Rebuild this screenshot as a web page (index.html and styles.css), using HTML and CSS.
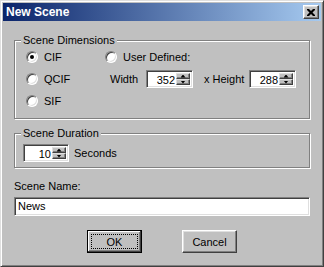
FILE: index.html
```html
<!DOCTYPE html>
<html>
<head>
<meta charset="utf-8">
<title>New Scene</title>
<link rel="stylesheet" href="styles.css">
</head>
<body>
<div class="window">
  <div class="titlebar">
    <span class="title">New Scene</span>
    <span class="close-btn"><svg width="8" height="7" viewBox="0 0 8 7"><path d="M0 0h2l2 2 2-2h2v1l-2.5 2.5L8 6v1H6L4 5 2 7H0V6l2.5-2.5L0 1z" fill="#000"/></svg></span>
  </div>
  <div class="content">
    <fieldset class="group dims">
      <legend>Scene Dimensions</legend>
      <div class="dims-grid">
        <div class="col-left">
          <div class="radio-row"><span class="radio checked"></span><span>CIF</span></div>
          <div class="radio-row"><span class="radio"></span><span>QCIF</span></div>
          <div class="radio-row"><span class="radio"></span><span>SIF</span></div>
        </div>
        <div class="col-right">
          <div class="radio-row"><span class="radio"></span><span>User Defined:</span></div>
          <div class="size-row">
            <span class="lbl-width">Width</span>
            <div class="spin spin-size"><span class="val">352</span><span class="spin-btns"><span class="sb"><i class="arr up"></i></span><span class="sb"><i class="arr down"></i></span></span></div>
            <span class="lbl-height">x Height</span>
            <div class="spin spin-size"><span class="val">288</span><span class="spin-btns"><span class="sb"><i class="arr up"></i></span><span class="sb"><i class="arr down"></i></span></span></div>
          </div>
        </div>
      </div>
    </fieldset>
    <fieldset class="group dur">
      <legend>Scene Duration</legend>
      <div class="dur-row">
        <div class="spin spin-dur"><span class="val">10</span><span class="spin-btns"><span class="sb"><i class="arr up"></i></span><span class="sb"><i class="arr down"></i></span></span></div>
        <span class="lbl-sec">Seconds</span>
      </div>
    </fieldset>
    <div class="name-label">Scene Name:</div>
    <div class="textfield">News</div>
    <div class="buttons">
      <div class="btn default"><span class="btn-face">OK</span></div>
      <div class="btn"><span class="btn-face">Cancel</span></div>
    </div>
  </div>
</div>
</body>
</html>
```
FILE: styles.css
```css
html, body {
  margin: 0;
  padding: 0;
  background: #c0c0c0;
}
body {
  font-family: "Liberation Sans", Arial, sans-serif;
  font-size: 11px;
  color: #000;
}
.window {
  width: 324px;
  height: 267px;
  box-sizing: border-box;
  background: #c0c0c0;
  border: 1px solid;
  border-color: #dfdfdf #404040 #404040 #dfdfdf;
  box-shadow: inset 1px 1px #fff, inset -1px -1px #808080;
  padding: 2px;
  display: flex;
  flex-direction: column;
}
.titlebar {
  height: 18px;
  background: linear-gradient(to right, #0a246a, #a6caf0);
  display: flex;
  align-items: center;
  justify-content: space-between;
  padding: 0 2px 0 3px;
}
.title {
  color: #fff;
  font-weight: bold;
  font-size: 12px;
  line-height: 18px;
}
.close-btn {
  width: 16px;
  height: 14px;
  box-sizing: border-box;
  background: #c0c0c0;
  border: 1px solid;
  border-color: #fff #404040 #404040 #fff;
  box-shadow: inset -1px -1px #808080, inset 1px 1px #dfdfdf;
  display: flex;
  align-items: center;
  justify-content: center;
}
.close-btn svg { display: block; }
.content {
  padding: 14px 11px 0 11px;
  display: flex;
  flex-direction: column;
}
.group {
  margin: 0;
  padding: 0;
  border: 1px solid #808080;
  box-shadow: inset 1px 1px #fff, 1px 1px #fff;
  min-width: 0;
}
.group legend {
  margin-left: 6px;
  padding: 0 2px;
  line-height: 11px;
  background: #c0c0c0;
}
.dims-grid {
  display: flex;
  padding: 0 0 6px 11px;
}
.col-left {
  width: 79px;
  display: flex;
  flex-direction: column;
}
.col-right {
  display: flex;
  flex-direction: column;
}
.radio-row {
  height: 22px;
  display: flex;
  align-items: center;
  gap: 6px;
}
.radio {
  width: 12px;
  height: 12px;
  box-sizing: border-box;
  border-radius: 50%;
  background: #fff;
  border: 1px solid;
  border-color: #808080 #fff #fff #808080;
  box-shadow: inset 1px 1px #404040, inset -1px -1px #dfdfdf;
  display: flex;
  align-items: center;
  justify-content: center;
}
.radio.checked::after {
  content: "";
  width: 4px;
  height: 4px;
  border-radius: 50%;
  background: #000;
}
.size-row {
  height: 22px;
  display: flex;
  align-items: center;
  padding-left: 5px;
}
.lbl-width { width: 36px; }
.lbl-height { width: 45px; margin-left: 11px; }
.spin {
  height: 18px;
  box-sizing: border-box;
  background: #fff;
  border: 1px solid;
  border-color: #808080 #fff #fff #808080;
  box-shadow: inset 1px 1px #404040, inset -1px -1px #dfdfdf;
  padding: 2px 2px 2px 2px;
  display: flex;
}
.spin-size { width: 47px; }
.spin-dur { width: 46px; }
.spin .val {
  flex: 1;
  text-align: right;
  line-height: 14px;
  padding-right: 1px;
}
.spin-btns {
  width: 14px;
  display: flex;
  flex-direction: column;
}
.sb {
  flex: 1;
  box-sizing: border-box;
  background: #c0c0c0;
  border: 1px solid;
  border-color: #dfdfdf #404040 #404040 #dfdfdf;
  box-shadow: inset -1px -1px #808080;
  display: flex;
  align-items: center;
  justify-content: center;
}
.arr {
  display: block;
  width: 5px;
  height: 3px;
  background: #000;
}
.arr.up { clip-path: polygon(50% 0, 100% 100%, 0 100%); }
.arr.down { clip-path: polygon(0 0, 100% 0, 50% 100%); }
.dur {
  margin-top: 9px;
}
.dur-row {
  display: flex;
  align-items: center;
  padding: 5px 0 5px 8px;
  gap: 5px;
}
.name-label {
  margin-top: 12px;
  line-height: 13px;
}
.textfield {
  margin-top: 4px;
  height: 19px;
  box-sizing: border-box;
  background: #fff;
  border: 1px solid;
  border-color: #808080 #fff #fff #808080;
  box-shadow: inset 1px 1px #404040, inset -1px -1px #dfdfdf;
  padding: 0 3px;
  line-height: 17px;
}
.buttons {
  margin-top: 14px;
  display: flex;
  justify-content: center;
  gap: 40px;
}
.btn {
  width: 55px;
  height: 23px;
  box-sizing: border-box;
  border: 1px solid;
  border-color: #fff #404040 #404040 #fff;
  box-shadow: inset -1px -1px #808080, inset 1px 1px #dfdfdf;
  padding: 3px;
  display: flex;
}
.btn.default {
  border-color: #000;
  box-shadow: inset -1px -1px #404040, inset 1px 1px #fff, inset -2px -2px #808080;
}
.btn-face {
  flex: 1;
  display: flex;
  align-items: center;
  justify-content: center;
  border: 1px dotted transparent;
}
.btn.default .btn-face {
  border-color: #000;
}
```
